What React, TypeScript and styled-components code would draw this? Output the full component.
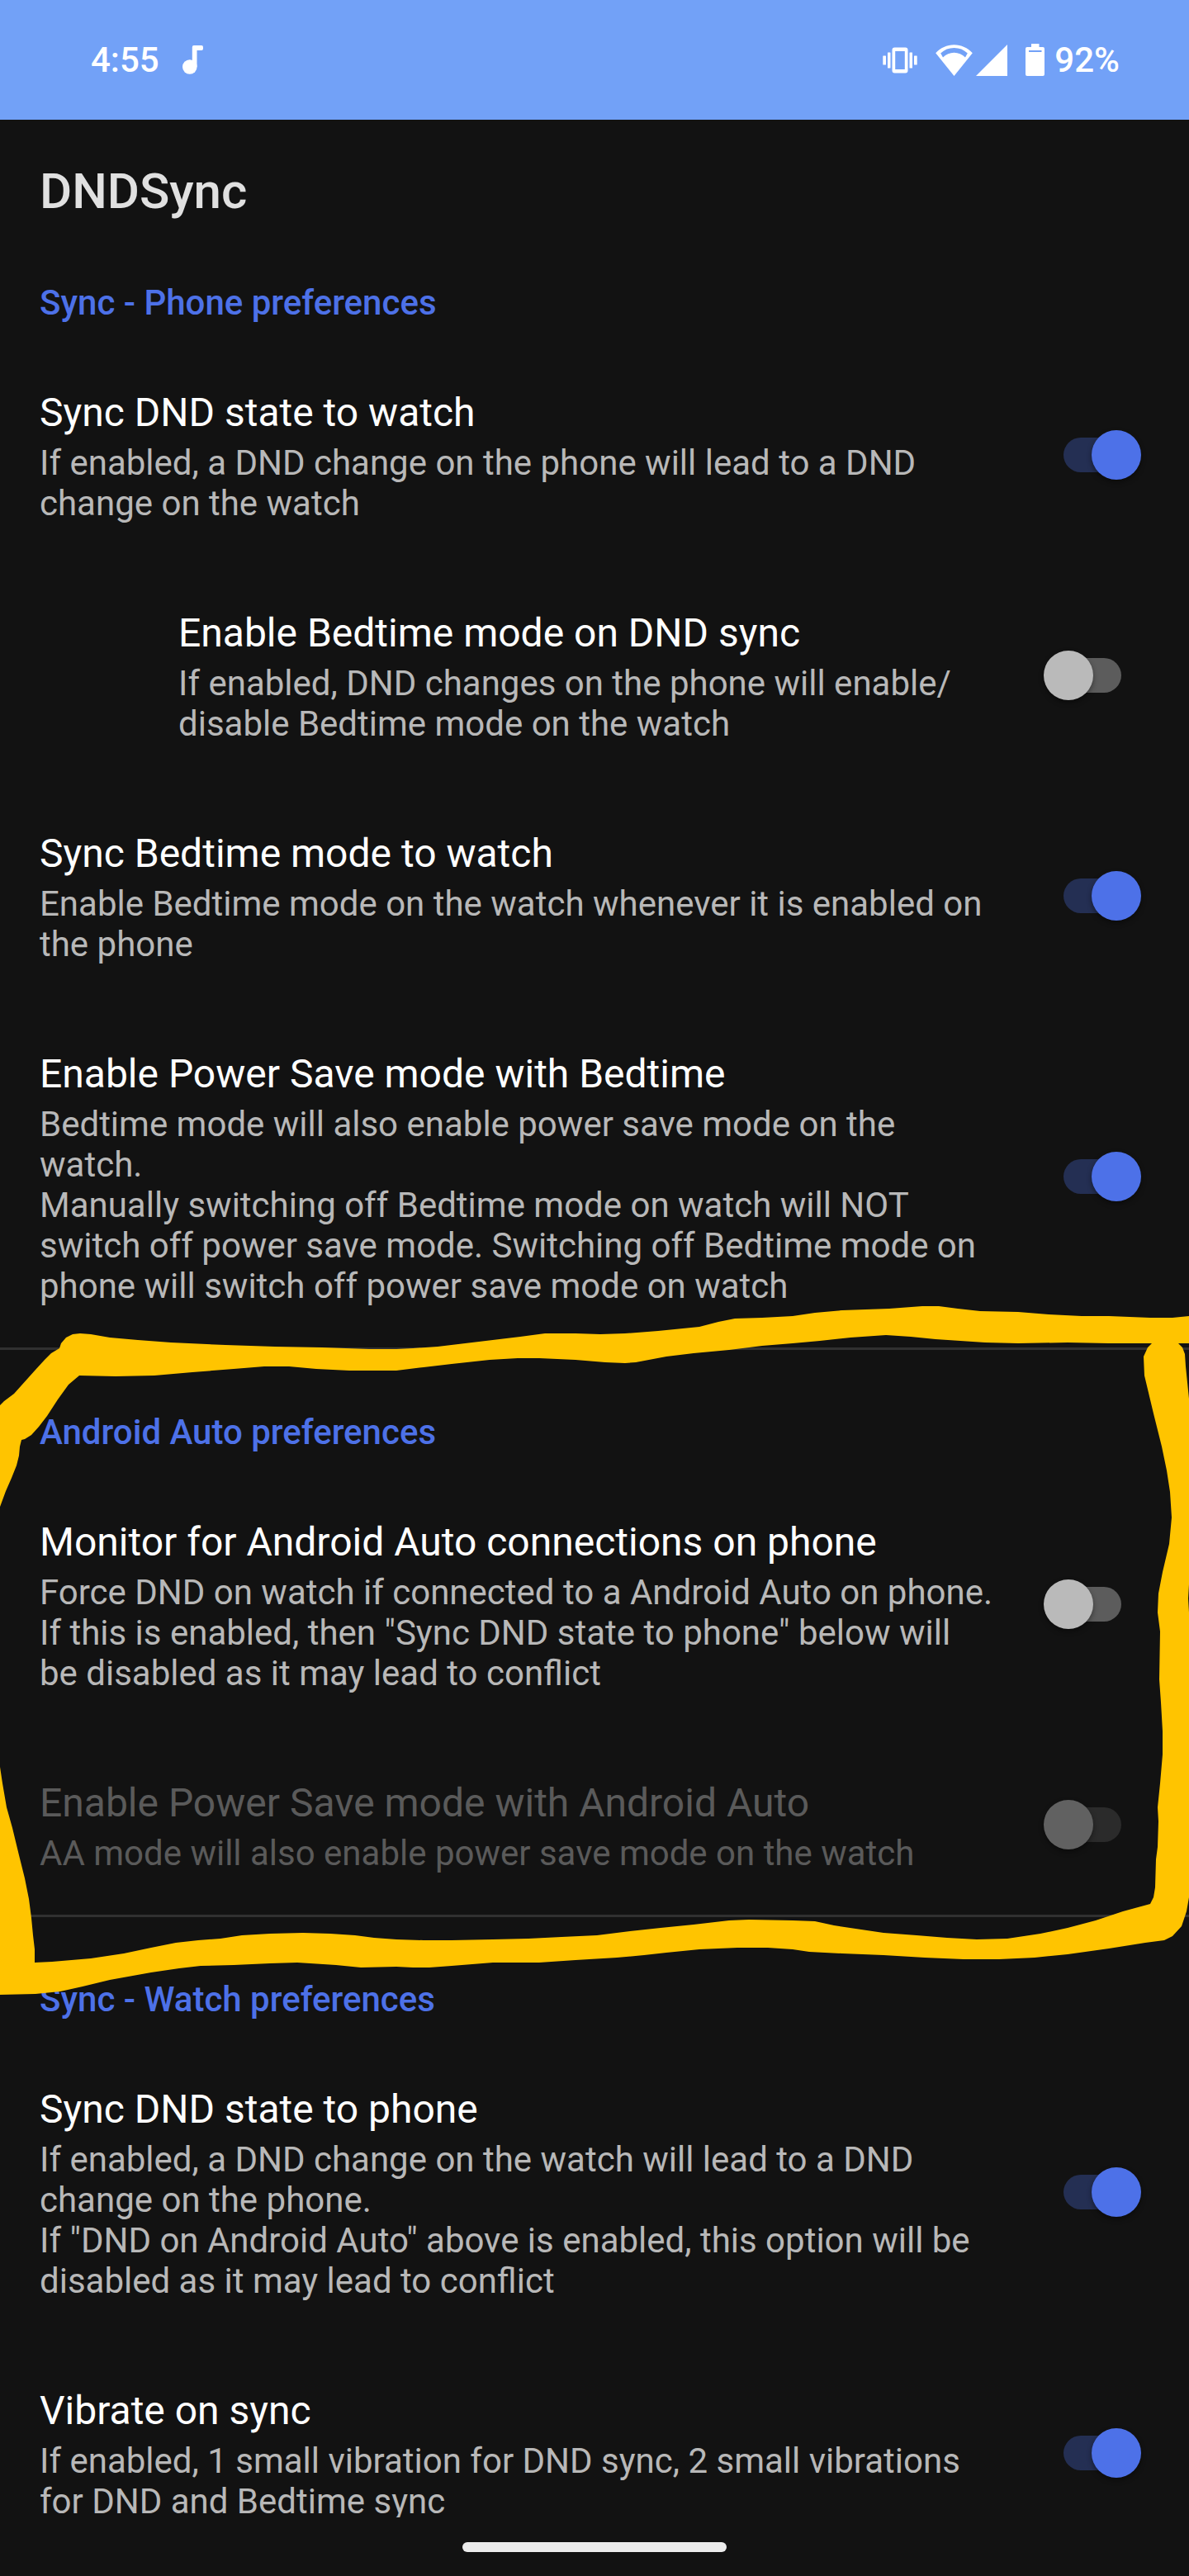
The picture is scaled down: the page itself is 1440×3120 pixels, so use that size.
import React, { useId, useState } from "react";
import styled, { createGlobalStyle } from "styled-components";

const color = {
  background: "#121212",
  statusBar: "#72a1f7",
  accent: "#4d71e8",
  accentTrack: "#242f53",
  heading: "#e0e0e0",
  title: "#ffffff",
  summary: "#b8b8b8",
  disabled: "#5a5a5a",
  divider: "#303030",
  marker: "#ffc400",
};

const GlobalStyle = createGlobalStyle`
  *, *::before, *::after { box-sizing: border-box; }
  body {
    margin: 0;
    background: ${color.background};
    font-family: Roboto, "Noto Sans", sans-serif;
  }
`;

const Screen = styled.div`
  display: flex;
  flex-direction: column;
  height: 100vh;
  background: ${color.background};
`;

const StatusBar = styled.header`
  display: flex;
  flex: none;
  align-items: center;
  justify-content: space-between;
  height: 145px;
  padding: 0 84px 0 110px;
  background: ${color.statusBar};
  color: #ffffff;
  font-size: 42px;
  font-weight: 500;
  line-height: 49px;
`;

const StatusGroup = styled.div<{ $gap: number }>`
  display: flex;
  align-items: center;
  gap: ${({ $gap }) => $gap}px;
`;

const Glyph = styled.svg`
  display: block;
  flex: none;
  fill: currentColor;
`;

const AppBar = styled.div`
  display: flex;
  flex: none;
  align-items: center;
  height: 173px;
  padding: 0 48px;
`;

const AppTitle = styled.h1`
  margin: 0;
  color: ${color.heading};
  font-size: 60px;
  font-weight: 500;
  line-height: 70px;
`;

const PreferenceList = styled.main`
  flex: 1;
  min-height: 0;
  overflow-y: auto;
  scrollbar-width: none;
`;

const Section = styled.section<{ $divided?: boolean }>`
  position: relative;
  padding-top: ${({ $divided }) => ($divided ? 75 : 24)}px;
  border-top: ${({ $divided }) => ($divided ? `3px solid ${color.divider}` : "none")};
`;

const SectionTitle = styled.h2`
  margin: 0;
  padding: 0 48px 26px;
  color: ${color.accent};
  font-size: 42px;
  font-weight: 500;
  line-height: 49px;
`;

const Row = styled.div<{ $indented?: boolean }>`
  display: flex;
  align-items: center;
  gap: 60px;
  padding: 50px 58px 50px ${({ $indented }) => ($indented ? 216 : 48)}px;
`;

const RowText = styled.div<{ $disabled?: boolean }>`
  display: flex;
  flex: 1;
  flex-direction: column;
  gap: 8px;
  min-width: 0;
  padding-top: 5px;
  color: ${({ $disabled }) => ($disabled ? color.disabled : color.summary)};
`;

const RowTitle = styled.label<{ $disabled?: boolean }>`
  color: ${({ $disabled }) => ($disabled ? color.disabled : color.title)};
  font-size: 48px;
  line-height: 56px;
`;

const RowSummary = styled.p`
  margin: 0;
  font-size: 42px;
  line-height: 49px;
  white-space: pre-line;
`;

const Switch = styled.input`
  appearance: none;
  display: grid;
  flex: none;
  align-items: center;
  width: 118px;
  height: 60px;
  margin: 0;
  cursor: pointer;

  &::before,
  &::after {
    content: "";
    grid-area: 1 / 1;
  }

  &::before {
    justify-self: center;
    width: 70px;
    height: 42px;
    border-radius: 21px;
    background: #5c5c5c;
  }

  &::after {
    justify-self: start;
    width: 60px;
    height: 60px;
    border-radius: 50%;
    background: #bababa;
    box-shadow: 0 3px 6px rgba(0, 0, 0, 0.4);
  }

  &:checked::before {
    background: ${color.accentTrack};
  }

  &:checked::after {
    justify-self: end;
    background: ${color.accent};
  }

  &:disabled {
    cursor: default;
  }

  &:disabled::before {
    background: #2b2b2b;
  }

  &:disabled::after {
    background: #616161;
  }
`;

const NavigationBar = styled.footer`
  display: flex;
  flex: none;
  align-items: center;
  justify-content: center;
  height: 71px;
`;

const HomeHandle = styled.button`
  width: 320px;
  height: 12px;
  padding: 0;
  border: 0;
  border-radius: 6px;
  background: #ececec;
`;

const MarkerOverlay = styled.svg`
  position: absolute;
  z-index: 1;
  top: -83px;
  left: 0;
  width: 100%;
  height: 900px;
  fill: ${color.marker};
  pointer-events: none;
`;

/* Hand-drawn marker loop around the Android Auto section. */
const markerPoints = `
0,1702 5,1697 17,1688 43,1659 54,1647 62,1639 72,1633 74,1627 80,1620 88,1616 97,1615 110,1616 133,1620 167,1623 207,1626
273,1629 333,1631 390,1632 447,1634 480,1634 500,1633 530,1631 580,1625 630,1619 660,1615 697,1615
727,1616 757,1615 797,1612 847,1607 870,1601 890,1597 923,1596 960,1594 987,1590 1020,1587 1077,1585
1117,1582 1137,1582 1160,1585 1187,1588 1233,1589 1270,1592 1310,1594 1343,1594 1393,1596 1420,1596
1440,1594 1440,1627 1427,1627 1432,1632 1435,1640 1436,1655 1440,1694 1440,1919 1439,1936 1440,1953
1440,2298 1437,2315 1431,2333 1420,2345 1410,2350 1387,2353 1343,2360 1293,2367 1253,2371 1210,2373
1167,2373 1120,2371 1070,2368 1020,2366 980,2364 960,2361 930,2359 893,2359 847,2361 807,2365 780,2368
747,2371 697,2374 653,2377 597,2377 547,2381 520,2383 500,2383 480,2382 437,2383 407,2380 360,2377
327,2378 283,2380 243,2381 217,2384 183,2389 133,2398 100,2406 73,2412 43,2415 0,2416 0,2140 3,2160
8,2189 15,2214 23,2247 30,2275 35,2300 38,2323 40,2344 42,2361 42,2377 63,2376 110,2372 150,2366
183,2359 213,2353 240,2350 267,2348 293,2344 327,2342 367,2341 400,2342 430,2344 453,2347 480,2349
513,2350 547,2350 597,2349 640,2348 680,2346 723,2344 763,2339 800,2335 840,2331 883,2326 907,2325
960,2326 987,2327 1010,2332 1043,2337 1070,2341 1110,2344 1147,2347 1183,2349 1220,2348 1260,2342
1293,2335 1327,2326 1360,2315 1393,2306 1397,2298 1399,2286 1400,2252 1402,2237 1403,2206 1402,2189
1405,2160 1408,2125 1408,2097 1406,2062 1404,2034 1405,1976 1402,1953 1403,1930 1408,1904 1416,1870
1419,1838 1417,1807 1413,1781 1407,1752 1397,1712 1386,1666 1385,1643 1390,1632 1395,1627 1343,1627
1293,1626 1233,1627 1193,1626 1133,1622 1103,1619 1073,1617 1030,1620 993,1624 960,1627 923,1630
883,1635 840,1639 807,1643 770,1650 757,1651 733,1650 697,1647 653,1645 627,1645 593,1647 547,1652
513,1656 480,1660 423,1660 383,1658 350,1655 320,1655 283,1658 233,1662 187,1666 140,1667 96,1666
83,1677 70,1695 57,1715 47,1728 38,1738 30,1743 26,1744 24,1752 23,1763 20,1775 14,1790 7,1806 0,1825`;

const MarkerLoop = () => (
  <MarkerOverlay viewBox="0 1552 1440 900" preserveAspectRatio="none" aria-hidden="true">
    <polygon points={markerPoints} />
  </MarkerOverlay>
);

const NoteIcon = () => (
  <Glyph width="25" height="35" viewBox="0 0 25 35" aria-hidden="true">
    <circle cx="8.8" cy="26" r="8.8" />
    <path d="M11.800 20V2q0-2 2-2H23q2 0 2 2v2q0 2-2 2h-5.500v20h-5.700z" />
  </Glyph>
);

const VibrateIcon = () => (
  <Glyph width="42" height="32" viewBox="0 0 42 32" aria-hidden="true">
    <rect x="0.300" y="10.500" width="3.700" height="11" rx="0.500" />
    <rect x="6" y="6.500" width="3.500" height="19" rx="0.500" />
    <rect x="32.500" y="6.500" width="3.500" height="19" rx="0.500" />
    <rect x="38" y="10.500" width="3.700" height="11" rx="0.500" />
    <path
      fillRule="evenodd"
      d="M14.500.5h13Q30.500.5 30.500 3.500v25Q30.500 31.500 27.500 31.500h-13Q11.500 31.500 11.500 28.500v-25Q11.500.5 14.500.5zM15.200 5v22h11.600V5z"
    />
  </Glyph>
);

const WifiIcon = () => (
  <Glyph width="45" height="38" viewBox="0 0 45 38" aria-hidden="true">
    <path
      fillRule="evenodd"
      d="M22.500.2C13.800.2 6 3.900.2 10.200L22.500 38 44.800 10.200C39 3.900 31.200.2 22.500.2zM22.500 4c6.200 0 11.800 2.200 16.300 6.400l-2.800 5C32.200 11.800 27.600 9.700 22.500 9.700S12.800 11.800 9 15.400l-2.800-5C10.700 6.200 16.300 4 22.500 4z"
    />
  </Glyph>
);

const SignalIcon = () => (
  <Glyph width="38" height="38" viewBox="0 0 38 38" aria-hidden="true">
    <path d="M38 0v38H0z" />
  </Glyph>
);

const BatteryIcon = () => (
  <Glyph width="23" height="39" viewBox="0 0 23 39" aria-hidden="true">
    <path
      fillRule="evenodd"
      d="M7 0h9.500v4H21q2 0 2 2v31q0 2-2 2H2q-2 0-2-2V6q0-2 2-2h5zM4 8v2h15.500V8z"
    />
  </Glyph>
);

type PreferenceProps = {
  title: string;
  summary: string;
  on?: boolean;
  disabled?: boolean;
  indented?: boolean;
};

/* Lets a summary wrap after a slash between two words. */
const withSlashBreaks = (text: string) =>
  text.split("/").map((part, index) => (
    <React.Fragment key={index}>
      {index > 0 && (
        <>
          /<wbr />
        </>
      )}
      {part}
    </React.Fragment>
  ));

function Preference({ title, summary, on = false, disabled, indented }: PreferenceProps) {
  const [checked, setChecked] = useState(on);
  const id = useId();
  return (
    <Row $indented={indented}>
      <RowText $disabled={disabled}>
        <RowTitle htmlFor={id} $disabled={disabled}>
          {title}
        </RowTitle>
        <RowSummary id={`${id}-summary`}>{withSlashBreaks(summary)}</RowSummary>
      </RowText>
      <Switch
        id={id}
        type="checkbox"
        role="switch"
        checked={checked}
        disabled={disabled}
        aria-describedby={`${id}-summary`}
        onChange={(event) => setChecked(event.target.checked)}
      />
    </Row>
  );
}

export default function App() {
  return (
    <>
      <GlobalStyle />
      <Screen>
        <StatusBar>
          <StatusGroup $gap={28}>
            <span>4:55</span>
            <NoteIcon />
          </StatusGroup>
          <StatusGroup $gap={22}>
            <VibrateIcon />
            <StatusGroup $gap={4}>
              <WifiIcon />
              <SignalIcon />
            </StatusGroup>
            <StatusGroup $gap={12}>
              <BatteryIcon />
              <span>92%</span>
            </StatusGroup>
          </StatusGroup>
        </StatusBar>
        <AppBar>
          <AppTitle>DNDSync</AppTitle>
        </AppBar>
        <PreferenceList>
          <Section>
            <SectionTitle>Sync - Phone preferences</SectionTitle>
            <Preference
              title="Sync DND state to watch"
              summary="If enabled, a DND change on the phone will lead to a DND change on the watch"
              on
            />
            <Preference
              title="Enable Bedtime mode on DND sync"
              summary="If enabled, DND changes on the phone will enable/disable Bedtime mode on the watch"
              indented
            />
            <Preference
              title="Sync Bedtime mode to watch"
              summary="Enable Bedtime mode on the watch whenever it is enabled on the phone"
              on
            />
            <Preference
              title="Enable Power Save mode with Bedtime"
              summary={
                "Bedtime mode will also enable power save mode on the watch.\nManually switching off Bedtime mode on watch will NOT switch off power save mode. Switching off Bedtime mode on phone will switch off power save mode on watch"
              }
              on
            />
          </Section>
          <Section $divided>
            <SectionTitle>Android Auto preferences</SectionTitle>
            <Preference
              title="Monitor for Android Auto connections on phone"
              summary={
                'Force DND on watch if connected to a Android Auto on phone.\nIf this is enabled, then "Sync DND state to phone" below will be disabled as it may lead to conflict'
              }
            />
            <Preference
              title="Enable Power Save mode with Android Auto"
              summary="AA mode will also enable power save mode on the watch"
              disabled
            />
            <MarkerLoop />
          </Section>
          <Section $divided>
            <SectionTitle>Sync - Watch preferences</SectionTitle>
            <Preference
              title="Sync DND state to phone"
              summary={
                'If enabled, a DND change on the watch will lead to a DND change on the phone.\nIf "DND on Android Auto" above is enabled, this option will be disabled as it may lead to conflict'
              }
              on
            />
            <Preference
              title="Vibrate on sync"
              summary="If enabled, 1 small vibration for DND sync, 2 small vibrations for DND and Bedtime sync"
              on
            />
          </Section>
        </PreferenceList>
        <NavigationBar>
          <HomeHandle type="button" aria-label="Home" />
        </NavigationBar>
      </Screen>
    </>
  );
}
